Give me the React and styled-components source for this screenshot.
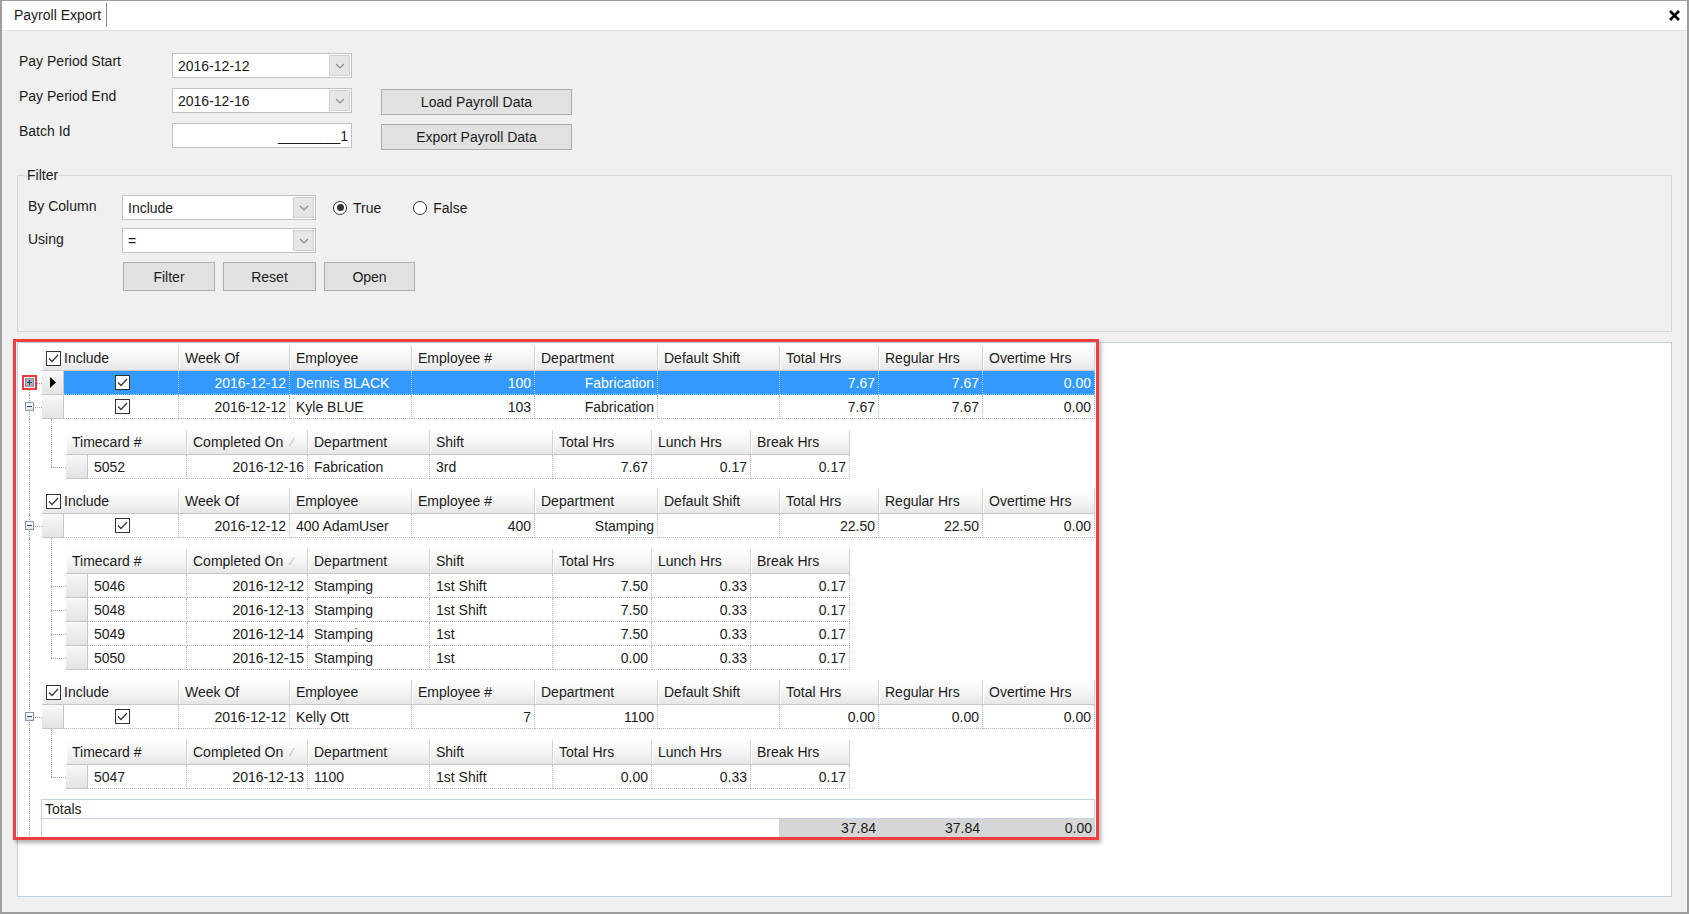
import React from "react";
import styled, { createGlobalStyle, css } from "styled-components";

const GlobalStyle = createGlobalStyle`
  html, body {
    margin: 0;
    padding: 0;
    background: #f0f0f0;
  }
  body {
    font-family: "Liberation Sans", Arial, sans-serif;
    font-size: 14px;
    color: #1b1b1b;
  }
  * {
    box-sizing: border-box;
  }
`;

// Window chrome
const Window = styled.div`
  position: relative;
  width: 1689px;
  height: 914px;
  background: #f0f0f0;
  border: solid #9d9d9d;
  border-width: 1px 2px 2px 2px;
  display: flex;
  flex-direction: column;
  overflow: hidden;
`;

const TabStrip = styled.div`
  height: 30px;
  flex: 0 0 30px;
  background: #fff;
  border-bottom: 1px solid #e4e4e4;
  display: flex;
  align-items: stretch;
`;

const Tab = styled.div`
  display: flex;
  align-items: center;
  padding: 0 5px 0 12px;
  border-right: 1px solid #8d8d8d;
  margin: 2px 0 3px;
  white-space: nowrap;
`;

const CloseButton = styled.div`
  margin-left: auto;
  width: 22px;
  display: flex;
  align-items: center;
  justify-content: center;
  margin-right: 2px;
`;

const Body = styled.div`
  flex: 1;
  display: flex;
  flex-direction: column;
  padding: 0 15px 15px 15px;
`;

// Parameters form
const ParamsForm = styled.div`
  display: grid;
  grid-template-columns: 153px 180px 29px 191px;
  grid-auto-rows: 25px;
  row-gap: 10px;
  margin: 22px 0 0 2px;
`;

const Label = styled.div`
  align-self: start;
  line-height: 16px;
  padding-top: ${(p) => p.$pt || 0}px;
  white-space: nowrap;
`;

const Combo = styled.div`
  height: 25px;
  background: #fff;
  border: 1px solid #c2c2c2;
  display: flex;
  align-items: center;
  padding-left: 5px;
`;

const ComboText = styled.span`
  flex: 1;
`;

const DropButton = styled.div`
  width: 21px;
  height: 21px;
  margin-right: 1px;
  background: #e6e6e6;
  border: 1px solid #d0d0d0;
  display: flex;
  align-items: center;
  justify-content: center;
`;

const TextBox = styled.div`
  height: 25px;
  background: #fff;
  border: 1px solid #c2c2c2;
  display: flex;
  align-items: center;
  justify-content: flex-end;
  padding-right: 3px;
`;

const Button = styled.button`
  font: inherit;
  color: #1b1b1b;
  height: ${(p) => p.$h || 26}px;
  width: ${(p) => (p.$w ? `${p.$w}px` : "auto")};
  background: #e1e1e1;
  border: 1px solid #adadad;
  padding: 0;
  align-self: start;
  margin-top: ${(p) => p.$mt || 0}px;
`;

// Filter group
const FilterGroup = styled.fieldset`
  margin: 19px 0 0 0;
  padding: 0 9px;
  height: 165px;
  border: 1px solid #d7d7d7;
  min-width: 0;
`;

const Legend = styled.legend`
  padding: 0;
  line-height: 16px;
`;

const FilterGrid = styled.div`
  display: grid;
  grid-template-columns: 94px 194px auto;
  grid-template-rows: 25px 26px 29px;
  row-gap: 8px;
  margin: 12px 0 0 1px;
`;

const RadioRow = styled.div`
  display: flex;
  align-items: center;
  gap: 32px;
  margin-left: 17px;
`;

const RadioOption = styled.label`
  display: flex;
  align-items: center;
  gap: 6px;
`;

const RadioCircle = styled.span`
  width: 14px;
  height: 14px;
  border-radius: 50%;
  border: 1px solid #333;
  background: #fff;
  display: flex;
  align-items: center;
  justify-content: center;
  &::after {
    content: "";
    width: 7px;
    height: 7px;
    border-radius: 50%;
    background: ${(p) => (p.$checked ? "#333" : "transparent")};
  }
`;

const ButtonRow = styled.div`
  grid-column: 2 / 4;
  display: flex;
  gap: 8px;
  margin-left: 1px;
`;

// Grid
const GridPanel = styled.div`
  flex: 1;
  margin-top: 10px;
  background: #fff;
  border: 1px solid #c2d0dd;
  padding-top: 3px;
  display: flex;
  flex-direction: column;
`;

const Line = styled.div`
  display: flex;
  align-items: stretch;
`;

const dotted = "1px dotted #a3a3a3";

const Gutter = styled.div`
  position: relative;
  flex: 0 0 24px;
  ${({ $trunk }) =>
    $trunk &&
    css`
      &::before {
        content: "";
        position: absolute;
        left: 11px;
        top: ${$trunk === "from-mid" ? "50%" : "0"};
        bottom: 0;
        border-left: ${dotted};
      }
    `}
  ${({ $stub }) =>
    $stub &&
    css`
      &::after {
        content: "";
        position: absolute;
        left: 12px;
        right: 0;
        top: ${$stub === "bottom" ? "calc(100% - 1px)" : "50%"};
        border-top: ${dotted};
      }
    `}
`;

const Expander = styled.span`
  position: absolute;
  left: 7px;
  top: 50%;
  margin-top: -5px;
  width: 9px;
  height: 9px;
  z-index: 1;
  border: 1px solid #8797b0;
  background: ${(p) =>
    p.$marked ? "#a9adb3" : "linear-gradient(#ffffff, #dde3ea)"};
  display: flex;
  align-items: center;
  justify-content: center;
  ${(p) =>
    p.$marked &&
    css`
      outline: 2px solid #ee3a3a;
      outline-offset: 1px;
    `}
`;

const HeadRow = styled.div`
  display: flex;
`;

const HeadCell = styled.div`
  flex: 0 0 ${(p) => p.$w}px;
  height: 25px;
  display: flex;
  align-items: center;
  padding: 0 0 0 ${(p) => (p.$pl !== undefined ? p.$pl : 6)}px;
  background: linear-gradient(#ffffff, #f4f4f4 55%, #e6e6e6);
  border-right: 1px solid #d2d2d2;
  border-bottom: 1px solid #c6c6c6;
  box-shadow: inset 1px 0 0 #ffffff;
  white-space: nowrap;
  overflow: hidden;
`;

const SortMark = styled.span`
  margin-left: 8px;
  color: #b0b0b0;
  font-size: 11px;
`;

const DataRow = styled.div`
  position: relative;
  display: flex;
  height: 24px;
  background: ${(p) => (p.$selected ? "#3399ff" : "transparent")};
  color: ${(p) => (p.$selected ? "#ffffff" : "inherit")};
  ${(p) =>
    p.$child &&
    css`
      &::before {
        content: "";
        position: absolute;
        left: -15px;
        width: 15px;
        top: 50%;
        border-top: ${dotted};
      }
    `}
`;

const RowHeader = styled.div`
  flex: 0 0 22px;
  height: 24px;
  background: linear-gradient(#f8f8f8, #e3e3e3);
  border-right: 1px solid #c6c6c6;
  border-bottom: 1px solid #c6c6c6;
  display: flex;
  align-items: center;
  justify-content: center;
`;

const Cell = styled.div`
  flex: 0 0 ${(p) => p.$w}px;
  height: 24px;
  display: flex;
  align-items: center;
  justify-content: ${(p) =>
    p.$align === "right"
      ? "flex-end"
      : p.$align === "center"
      ? "center"
      : "flex-start"};
  padding: 0 3px 0 6px;
  border-right: 1px dotted ${(p) => (p.$selected ? "#a9d1fb" : "#b5b5b5")};
  border-bottom: 1px dotted ${(p) => (p.$selected ? "#a9d1fb" : "#b5b5b5")};
  white-space: nowrap;
  overflow: hidden;
`;

const CheckBox = styled.span`
  width: 15px;
  height: 15px;
  flex: 0 0 15px;
  border: 1px solid #333;
  background: #fff;
  display: flex;
  align-items: center;
  justify-content: center;
`;

const HeadLabel = styled.span`
  margin-left: 3px;
`;

const DetailBand = styled.div`
  position: relative;
  padding: 11px 0 10px 24px;
  &::before {
    content: "";
    position: absolute;
    left: 9px;
    top: 0;
    bottom: 22px;
    border-left: ${dotted};
  }
`;

const TotalsBox = styled.div`
  margin-left: -1px;
  width: 1054px;
  display: flex;
  flex-direction: column;
`;

const TotalsCaption = styled.div`
  height: 19px;
  border: 1px solid #c3d3e3;
  border-bottom: none;
  padding-left: 3px;
  display: flex;
  align-items: center;
`;

const TotalsValues = styled.div`
  height: 20px;
  display: flex;
  border: 1px solid #c3d3e3;
`;

const TotalsSpacer = styled.div`
  flex: 1;
`;

const TotalCell = styled.div`
  flex: 0 0 ${(p) => p.$w}px;
  background: #d6d6d6;
  border-left: 1px solid #c8d2dc;
  display: flex;
  align-items: center;
  justify-content: flex-end;
  padding-right: 2px;
`;

const Annotation = styled.div`
  position: absolute;
  left: 11px;
  top: 338px;
  width: 1086px;
  height: 501px;
  border: 3px solid #ef3f3f;
  box-shadow: 2px 3px 4px rgba(0, 0, 0, 0.3);
  pointer-events: none;
`;

// Icons
const Chevron = () => (
  <svg width="10" height="6" viewBox="0 0 10 6">
    <path d="M1 1 L5 5 L9 1" fill="none" stroke="#8a8a8a" strokeWidth="1.2" />
  </svg>
);

const Check = () => (
  <svg width="11" height="9" viewBox="0 0 11 9">
    <path d="M1 4.5 L4 7.5 L10 1" fill="none" stroke="#3a3a3a" strokeWidth="1.3" />
  </svg>
);

const CloseIcon = () => (
  <svg width="11" height="11" viewBox="0 0 11 11">
    <path d="M1 1 L10 10 M10 1 L1 10" stroke="#000" strokeWidth="2.6" />
  </svg>
);

const Triangle = () => (
  <svg width="6" height="11" viewBox="0 0 6 11">
    <path d="M0 0 L6 5.5 L0 11 Z" fill="#000" />
  </svg>
);

const PlusMinus = ({ plus }) => (
  <svg width="7" height="7" viewBox="0 0 7 7">
    <path d="M1 3.5 H6" stroke="#2c4a78" strokeWidth="1" />
    {plus && <path d="M3.5 1 V6" stroke="#2c4a78" strokeWidth="1" />}
  </svg>
);

// Data
const masterCols = [
  { key: "include", w: 115, title: "Include", align: "center" },
  { key: "week", w: 111, title: "Week Of", align: "right" },
  { key: "emp", w: 122, title: "Employee", align: "left" },
  { key: "num", w: 123, title: "Employee #", align: "right" },
  { key: "dept", w: 123, title: "Department", align: "right" },
  { key: "shift", w: 122, title: "Default Shift", align: "left" },
  { key: "total", w: 99, title: "Total Hrs", align: "right" },
  { key: "reg", w: 104, title: "Regular Hrs", align: "right" },
  { key: "ot", w: 112, title: "Overtime Hrs", align: "right" },
];

const childCols = [
  { w: 99, title: "Timecard #", align: "left" },
  { w: 121, title: "Completed On", align: "right", sorted: true },
  { w: 122, title: "Department", align: "left" },
  { w: 123, title: "Shift", align: "left" },
  { w: 99, title: "Total Hrs", align: "right" },
  { w: 99, title: "Lunch Hrs", align: "right" },
  { w: 99, title: "Break Hrs", align: "right" },
];

const groups = [
  [
    {
      expander: "plus",
      marked: true,
      selected: true,
      week: "2016-12-12",
      emp: "Dennis BLACK",
      num: "100",
      dept: "Fabrication",
      shift: "",
      total: "7.67",
      reg: "7.67",
      ot: "0.00",
    },
    {
      expander: "minus",
      week: "2016-12-12",
      emp: "Kyle BLUE",
      num: "103",
      dept: "Fabrication",
      shift: "",
      total: "7.67",
      reg: "7.67",
      ot: "0.00",
      children: [["5052", "2016-12-16", "Fabrication", "3rd", "7.67", "0.17", "0.17"]],
    },
  ],
  [
    {
      expander: "minus",
      week: "2016-12-12",
      emp: "400 AdamUser",
      num: "400",
      dept: "Stamping",
      shift: "",
      total: "22.50",
      reg: "22.50",
      ot: "0.00",
      children: [
        ["5046", "2016-12-12", "Stamping", "1st Shift", "7.50", "0.33", "0.17"],
        ["5048", "2016-12-13", "Stamping", "1st Shift", "7.50", "0.33", "0.17"],
        ["5049", "2016-12-14", "Stamping", "1st", "7.50", "0.33", "0.17"],
        ["5050", "2016-12-15", "Stamping", "1st", "0.00", "0.33", "0.17"],
      ],
    },
  ],
  [
    {
      expander: "minus",
      week: "2016-12-12",
      emp: "Kelly Ott",
      num: "7",
      dept: "1100",
      shift: "",
      total: "0.00",
      reg: "0.00",
      ot: "0.00",
      children: [["5047", "2016-12-13", "1100", "1st Shift", "0.00", "0.33", "0.17"]],
    },
  ],
];

const MasterHeader = () => (
  <HeadRow>
    {masterCols.map((c, i) =>
      i === 0 ? (
        <HeadCell key={c.key} $w={c.w + 22} $pl={4}>
          <CheckBox>
            <Check />
          </CheckBox>
          <HeadLabel>{c.title}</HeadLabel>
        </HeadCell>
      ) : (
        <HeadCell key={c.key} $w={c.w}>
          {c.title}
        </HeadCell>
      )
    )}
  </HeadRow>
);

const MasterRow = ({ row }) => (
  <DataRow $selected={row.selected}>
    <RowHeader>{row.selected && <Triangle />}</RowHeader>
    {masterCols.map((c) => (
      <Cell key={c.key} $w={c.w} $align={c.align} $selected={row.selected}>
        {c.key === "include" ? (
          <CheckBox>
            <Check />
          </CheckBox>
        ) : (
          row[c.key]
        )}
      </Cell>
    ))}
  </DataRow>
);

const ChildGrid = ({ rows }) => (
  <>
    <HeadRow>
      {childCols.map((c, i) => (
        <HeadCell key={c.title} $w={i === 0 ? c.w + 22 : c.w}>
          {c.title}
          {c.sorted && <SortMark>⁄</SortMark>}
        </HeadCell>
      ))}
    </HeadRow>
    {rows.map((r) => (
      <DataRow key={r[0]} $child>
        <RowHeader />
        {childCols.map((c, i) => (
          <Cell key={c.title} $w={c.w} $align={c.align}>
            {r[i]}
          </Cell>
        ))}
      </DataRow>
    ))}
  </>
);

export default function App() {
  return (
    <>
      <GlobalStyle />
      <Window>
        <TabStrip>
          <Tab>Payroll Export</Tab>
          <CloseButton>
            <CloseIcon />
          </CloseButton>
        </TabStrip>

        <Body>
          <ParamsForm>
            <Label>Pay Period Start</Label>
            <Combo>
              <ComboText>2016-12-12</ComboText>
              <DropButton>
                <Chevron />
              </DropButton>
            </Combo>
            <span />
            <span />

            <Label>Pay Period End</Label>
            <Combo>
              <ComboText>2016-12-16</ComboText>
              <DropButton>
                <Chevron />
              </DropButton>
            </Combo>
            <span />
            <Button $mt={1}>Load Payroll Data</Button>

            <Label>Batch Id</Label>
            <TextBox>________1</TextBox>
            <span />
            <Button $mt={1}>Export Payroll Data</Button>
          </ParamsForm>

          <FilterGroup>
            <Legend>Filter</Legend>
            <FilterGrid>
              <Label $pt={3}>By Column</Label>
              <Combo>
                <ComboText>Include</ComboText>
                <DropButton>
                  <Chevron />
                </DropButton>
              </Combo>
              <RadioRow>
                <RadioOption>
                  <RadioCircle $checked />
                  True
                </RadioOption>
                <RadioOption>
                  <RadioCircle />
                  False
                </RadioOption>
              </RadioRow>

              <Label $pt={3}>Using</Label>
              <Combo>
                <ComboText>=</ComboText>
                <DropButton>
                  <Chevron />
                </DropButton>
              </Combo>
              <span />

              <span />
              <ButtonRow>
                <Button $w={92} $h={29}>Filter</Button>
                <Button $w={93} $h={29}>Reset</Button>
                <Button $w={91} $h={29}>Open</Button>
              </ButtonRow>
            </FilterGrid>
          </FilterGroup>

          <GridPanel>
            {groups.map((group, gi) => (
              <React.Fragment key={gi}>
                <Line>
                  <Gutter $trunk={gi === 0 ? null : "full"} />
                  <MasterHeader />
                </Line>
                {group.map((row, ri) => (
                  <React.Fragment key={row.emp}>
                    <Line>
                      <Gutter
                        $trunk={gi === 0 && ri === 0 ? "from-mid" : "full"}
                        $stub
                      >
                        <Expander $marked={row.marked}>
                          <PlusMinus plus={row.expander === "plus"} />
                        </Expander>
                      </Gutter>
                      <MasterRow row={row} />
                    </Line>
                    {row.children && (
                      <Line>
                        <Gutter $trunk="full" />
                        <DetailBand>
                          <ChildGrid rows={row.children} />
                        </DetailBand>
                      </Line>
                    )}
                  </React.Fragment>
                ))}
              </React.Fragment>
            ))}

            <Line>
              <Gutter $trunk="full" $stub="bottom" />
              <TotalsBox>
                <TotalsCaption>Totals</TotalsCaption>
                <TotalsValues>
                  <TotalsSpacer />
                  <TotalCell $w={99}>37.84</TotalCell>
                  <TotalCell $w={104}>37.84</TotalCell>
                  <TotalCell $w={112}>0.00</TotalCell>
                </TotalsValues>
              </TotalsBox>
            </Line>
          </GridPanel>
        </Body>

        <Annotation />
      </Window>
    </>
  );
}
